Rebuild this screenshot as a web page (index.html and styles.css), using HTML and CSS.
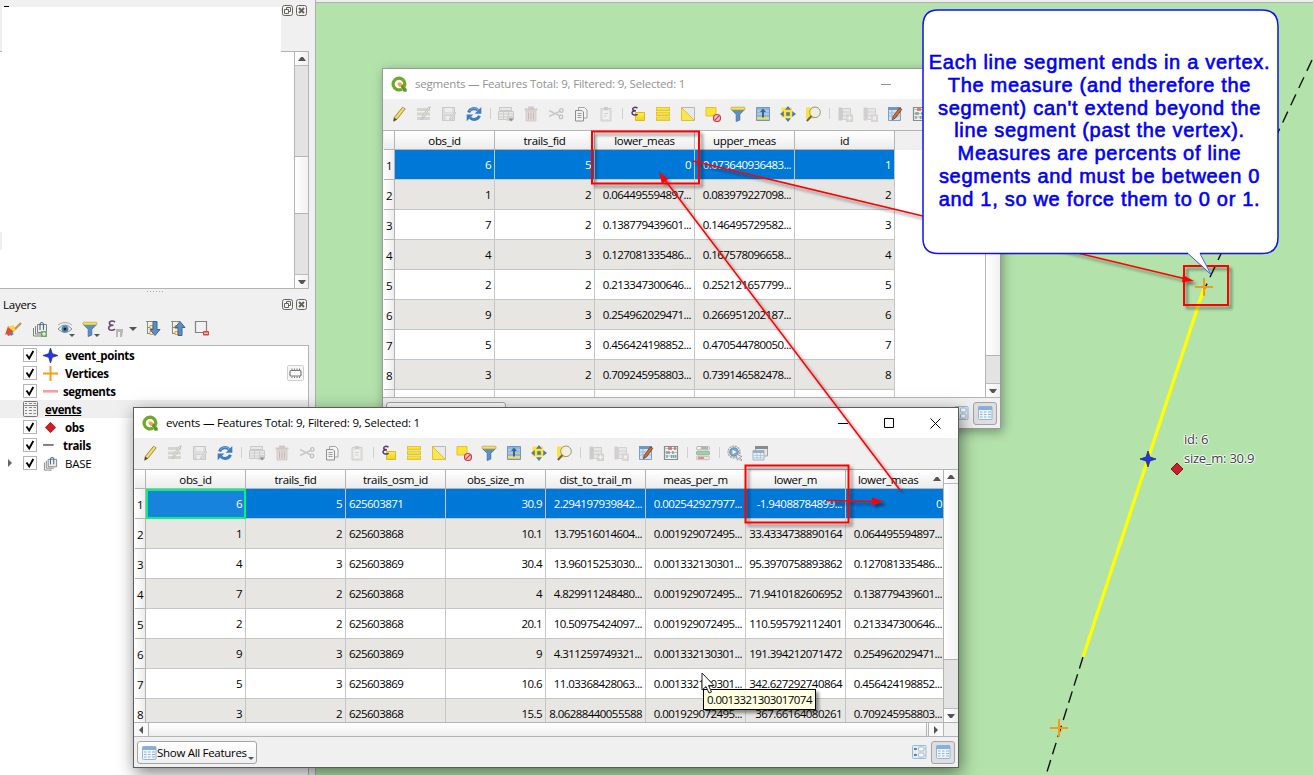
FILE: index.html
```
<!DOCTYPE html>
<html lang="en">
<head>
<meta charset="utf-8">
<title>QGIS attribute tables</title>
<link rel="stylesheet" href="styles.css">
</head>
<body>
<svg class="defs" width="0" height="0" aria-hidden="true">
  <defs>
    <linearGradient id="g-yellow" x1="0" y1="0" x2="0" y2="1"><stop offset="0" stop-color="#fff04a"/><stop offset="1" stop-color="#efd21c"/></linearGradient>
    <filter id="soft" x="-20%" y="-20%" width="140%" height="140%"><feDropShadow dx="3" dy="3" stdDeviation="1.5" flood-color="#000" flood-opacity=".45"/></filter>
    <symbol id="qgis" viewBox="0 0 16 16"><path d="M8 2.1a5.9 5.9 0 1 0 3 11" fill="none" stroke="#72a52c" stroke-width="3.2"/><path d="M8 2.1a5.9 5.9 0 0 1 5.3 8.2" fill="none" stroke="#72a52c" stroke-width="3.2"/><path d="M8.500 8.500h3.200l4 4.400v2.800h-3z" fill="#589632"/><path d="M6.600 6.600h3l2 2-2.600 2.600-2.400-2.100z" fill="#f6a63c"/></symbol>
    <symbol id="pencil" viewBox="0 0 16 16"><path d="M11.500 1.300l2.700 1.500L6 13.300l-3.300 1.900.500-3.700z" fill="#e7cf45" stroke="#8f7f3a" stroke-width=".8"/><path d="M3.200 11.500L6 13.300l-3.500 2.200z" fill="#4d4935"/><path d="M12.800 2L4.600 12.400" stroke="#fff2a0" stroke-width=".8"/></symbol>
    <symbol id="multiedit" viewBox="0 0 16 16"><path d="M1 2h13v3H1zM1 6.500h13v3H1zM1 11h13v3H1z" fill="#c0beb4"/><path d="M14.500 1L8 11l-2.500 3 .8-4L12.500 1z" fill="#d9d6cf" stroke="#928f88" stroke-width=".8"/></symbol>
    <symbol id="save" viewBox="0 0 16 16"><path d="M1.500 1.500h12v13h-12z" fill="#d0d0cf" stroke="#a8a8a8"/><path d="M4 2h7v4H4z" fill="#eee"/><path d="M4 9.500h7v5H4z" fill="#ececec" stroke="#aaa" stroke-width=".7"/><path d="M15 7l-4.500 6-2 1 .5-2L13.500 6z" fill="#d8d8d5" stroke="#999" stroke-width=".7"/></symbol>
    <symbol id="refresh" viewBox="0 0 16 16"><path d="M2.600 6.500A5.700 5.700 0 0 1 12 4.300" fill="none" stroke="#3f7cc0" stroke-width="3"/><path d="M15.300 1v6.800H8.700z" fill="#3f7cc0"/><path d="M13.400 9.700A5.700 5.700 0 0 1 4 11.800" fill="none" stroke="#3f7cc0" stroke-width="3"/><path d="M.7 15.200V8.400h6.600z" fill="#3f7cc0"/><path d="M3.600 5A5 5 0 0 1 12 4" fill="none" stroke="#86b4e3" stroke-width=".9"/></symbol>
    <symbol id="addfeat" viewBox="0 0 16 16"><path d="M1.500 1.500h12v3h-12zM.5 5.500h15v8H.5z" fill="#e3e3e0" stroke="#aaa"/><path d="M1 8h14M1 11h14M5.500 5.500v8M10.500 5.500v8" stroke="#b4b4b1"/><path d="M9 10h6v5H9z" fill="#bbb"/><path d="M10.500 12.500h5L13 15.500z" fill="#444"/></symbol>
    <symbol id="trash" viewBox="0 0 16 16"><path d="M1.500 3.500h13M6 3V1.500h4V3" fill="none" stroke="#b9a5a2" stroke-width="1.800"/><path d="M3 5h10v10H3z" fill="#d6c6c3" stroke="#b5a29f" stroke-width=".8"/><path d="M5.500 6.500v7M8 6.500v7M10.500 6.500v7" stroke="#a58f8c"/></symbol>
    <symbol id="cut" viewBox="0 0 16 16"><path d="M1 4.500l11 5.500M1 10.500L12.500 5" stroke="#aaa" stroke-width="1.400"/><g fill="none" stroke="#999" stroke-width="1.300"><circle cx="13.300" cy="4.500" r="1.800"/><circle cx="13" cy="11" r="1.800"/></g></symbol>
    <symbol id="copy" viewBox="0 0 16 16"><path d="M5.500 1.500h6l2.500 2.500v8H5.500z" fill="#f4f4f4" stroke="#a3a3a3"/><path d="M2.500 4.500H9l1.500 1.500v9h-8z" fill="#f2f2f2" stroke="#8f8f8f"/><path d="M4.500 7.500h4M4.500 9.500h4M4.500 11.500h4" stroke="#9d9d9d"/></symbol>
    <symbol id="paste" viewBox="0 0 16 16"><path d="M3 2.500h10v12.500H3z" fill="#dcdcda" stroke="#b5b5b3"/><path d="M6 1h4v3H6z" fill="#b0b0ae"/><path d="M5 5h6v8H5z" fill="#f0f0ef"/><path d="M6 7.500h4M6 10h3" stroke="#bbb"/></symbol>
    <symbol id="selexp" viewBox="0 0 16 16"><path d="M5.500 6.500h9v8h-9z" fill="url(#g-yellow)" stroke="#d8ba25"/><path d="M7.500 2.200C5.500.8 2.500 1.200 2.700 3.300c.1 1.400 1.700 1.500 3.300 1.500-2 0-4 .4-4 2.300 0 2.300 3.500 2.600 5.600 1" fill="none" stroke="#5b3a66" stroke-width="1.500"/></symbol>
    <symbol id="selall" viewBox="0 0 16 16"><g fill="url(#g-yellow)" stroke="#dfc22c" stroke-width=".9"><rect x="1.500" y="1.500" width="13" height="3.300"/><rect x="1.500" y="6.300" width="13" height="3.300"/><rect x="1.500" y="11.100" width="13" height="3.300"/></g></symbol>
    <symbol id="invert" viewBox="0 0 16 16"><path d="M1.500 1.500h13v13z" fill="#e9e9e9" stroke="#b6b6b6"/><path d="M1.500 1.500v13h13z" fill="#fbe650" stroke="#dcc03a"/></symbol>
    <symbol id="desel" viewBox="0 0 16 16"><path d="M1 1.500h10v8.500H1z" fill="#fbe338" stroke="#dfc22c"/><circle cx="12" cy="12" r="3.500" fill="#f3c5c5" stroke="#d7393f" stroke-width="1.200"/><path d="M9.800 14.200l4.500-4.500" stroke="#d7393f" stroke-width="1.200"/></symbol>
    <symbol id="filter" viewBox="0 0 16 16"><path d="M1.300 3.500h13.400L9.800 8.300v5.800L6.200 15.500V8.300z" fill="#5c8fc4" stroke="#446f9d" stroke-width=".8"/><rect x="1" y="1.200" width="14" height="2.700" rx=".8" fill="#f4e25c" stroke="#b7a438" stroke-width=".7"/></symbol>
    <symbol id="movetop" viewBox="0 0 16 16"><path d="M1.500 1.500h13v13h-13z" fill="#8fb5dc" stroke="#6b98c4"/><path d="M2 5h12M2 8h12" stroke="#c3d9ee"/><path d="M2 11h12v2.500H2z" fill="#f5dc4a"/><path d="M8 2.500l3 3.500H9v5.500H7V6H5z" fill="#38658f"/></symbol>
    <symbol id="pan" viewBox="0 0 16 16"><path d="M1.500 1.500h10.500v10H1.500z" fill="#fbe338"/><path d="M8 0l3 3.800H5zM8 16l3-3.800H5zM0 8l3.800-3v6zM16 8l-3.800-3v6z" fill="#54799c"/><path d="M6.200 6.200h3.600v3.600H6.200z" fill="#54799c"/></symbol>
    <symbol id="zoom" viewBox="0 0 16 16"><path d="M1 1.500h8v11H1z" fill="#fbe338"/><circle cx="10" cy="6.300" r="5.300" fill="#f1eee2" fill-opacity=".92" stroke="#99947f" stroke-width="1"/><path d="M6.500 10L1.800 15" stroke="#6d6548" stroke-width="2"/></symbol>
    <symbol id="newfield" viewBox="0 0 16 16"><path d="M1.500 1.500h3.500v13H1.500z" fill="#b0b0b0"/><path d="M5.500 2.500h8v11h-8z" fill="#dedede" stroke="#b4b4b4"/><path d="M5.500 6h8M5.500 9.500h8" stroke="#bbb"/><path d="M9 8.500h7V16H9z" fill="#bcbdb2"/><path d="M12.500 10v4.500M10.200 12.200h4.600" stroke="#fafafa" stroke-width="1.300"/></symbol>
    <symbol id="delfield" viewBox="0 0 16 16"><path d="M1.500 1.500h3.500v13H1.500z" fill="#b8b5b5"/><path d="M5.500 2.500h8v11h-8z" fill="#dedede" stroke="#bbb"/><path d="M5.500 6h8M5.500 9.500h8" stroke="#bdbdbd"/><path d="M9 8.500h7V16H9z" fill="#cdbdbd"/><path d="M11 10.700l3 3M14 10.700l-3 3" stroke="#fafafa" stroke-width="1.200"/></symbol>
    <symbol id="editform" viewBox="0 0 16 16"><path d="M1.500 1.500h12v13h-12z" fill="#d3e2f1" stroke="#7ba0c4"/><path d="M1 1h13v3H1z" fill="#6d99c6"/><path d="M2 7h11M2 10h11M5 4v10" stroke="#9cbad6"/><path d="M12.500 1.800l2.300 1.500L8.500 12l-3 1.700.6-3.200z" fill="#d26a33" stroke="#743b20" stroke-width=".8"/></symbol>
    <symbol id="calc" viewBox="0 0 16 16"><path d="M1.500 1v14M14.500 1v14M1 14.500h14M1 1.500h14" stroke="#8b8b8b" stroke-width="1.200"/><path d="M1.500 3.500h13M1.500 7.500h13M1.500 11h13" stroke="#a6a6a6" stroke-width=".7"/><path d="M6 2v3M8 2v3M12 2v3" stroke="#d0585a" stroke-width="1.400"/><path d="M4 6v3M6 6v3M10 6v3" stroke="#6fa874" stroke-width="1.400"/><path d="M4 10v3M8.500 10v3M10.500 10v3M12.500 10v3" stroke="#7b9fc3" stroke-width="1.400"/></symbol>
    <symbol id="condfmt" viewBox="0 0 16 16"><rect x="1.500" y="1.500" width="13" height="3.200" rx="1" fill="#eee" stroke="#aaa" stroke-width=".8"/><rect x="1.500" y="6.300" width="13" height="3.500" rx="1" fill="#9fd09d" stroke="#8ea98d" stroke-width=".8"/><rect x="1.500" y="11.400" width="13" height="3.300" rx="1" fill="#f0e2e2" stroke="#b5b5b5" stroke-width=".8"/><path d="M3 13h6" stroke="#cf3b3b"/><path d="M6 3h7" stroke="#777"/></symbol>
    <symbol id="action" viewBox="0 0 16 16"><circle cx="7" cy="7" r="5.900" fill="none" stroke="#aaa" stroke-width="1.500" stroke-dasharray="2 .8"/><circle cx="7" cy="7" r="4.200" fill="#7aa6d0" stroke="#5f88ae"/><path d="M5.500 4.800l4 2.200-4 2.200z" fill="#fff"/><path d="M9 9l6 2.500-2.500 1L15 15l-1 .8-2.400-2.600-1.200 2z" fill="#eee" stroke="#888" stroke-width=".7"/></symbol>
    <symbol id="dock" viewBox="0 0 16 16"><path d="M3.500 1.500h12v9.500h-12z" fill="#e9e9e9" stroke="#a5a5a5"/><path d="M3 1h13v3H3z" fill="#8b8b8b"/><path d="M1 5.500h11v9.500H1z" fill="#e9f0f7" stroke="#a3b1be"/><path d="M1 6h11v2H1z" fill="#90b2d2"/><path d="M2 10.500h9M2 12.800h9M5 8v6M8.500 8v6" stroke="#a9c2da" stroke-width=".8"/></symbol>
    <symbol id="table" viewBox="0 0 16 16"><rect x="1.500" y="1.500" width="13.500" height="13" rx="1" fill="#eff5fb" stroke="#94b6d7"/><path d="M1.500 1.500H15V5H1.500z" fill="#84afda"/><path d="M3 7h2.500M7 7h2.500M11 7h3M3 9.500h2.500M7 9.500h2.500M11 9.500h3M3 12h2.500M7 12h2.500M11 12h3" stroke="#8eb3d8" stroke-width="1.100"/></symbol>
    <symbol id="form" viewBox="0 0 16 16"><rect x="1.500" y="1.500" width="13.500" height="13" rx="1" fill="#e2edf7" stroke="#9bb9d7"/><path d="M3 5h2.800M3 11h2.800" stroke="#31597f" stroke-width="1.300"/><g fill="#fff" stroke="#9bb9d7"><rect x="7.500" y="3" width="5.500" height="4" rx="1"/><rect x="7.500" y="9" width="5.500" height="4" rx="1"/></g></symbol>
    <symbol id="float" viewBox="0 0 11 11"><rect x=".5" y=".5" width="10" height="10" rx="2" fill="#f3f3f3" stroke="#65635c"/><path d="M4.500 4.500V2.500h4v4H6.500M2.500 4.500h4v4h-4z" fill="none" stroke="#65635c"/></symbol>
    <symbol id="close" viewBox="0 0 11 11"><rect x=".5" y=".5" width="10" height="10" rx="2" fill="#f3f3f3" stroke="#65635c"/><path d="M3 3l5 5M8 3L3 8" stroke="#65635c" stroke-width="2"/></symbol>
    <symbol id="check" viewBox="0 0 14 14"><rect x=".5" y=".5" width="13" height="13" fill="#fff" stroke="#b6b6b6"/><path d="M3.500 6.500l2.700 4L10.300 3" fill="none" stroke="#000" stroke-width="1.900"/></symbol>
    <symbol id="star" viewBox="0 0 14 14"><path d="M7 0l1.700 5.300L14 7 8.700 8.700 7 14 5.300 8.700 0 7l5.300-1.700z" fill="#2436e6" stroke="#252a66" stroke-width=".7"/></symbol>
    <symbol id="group" viewBox="0 0 16 16"><path d="M1.500 7v8h8M3.500 5v8h8" fill="none" stroke="#7d827a"/><path d="M5.500 3.500h9v8h-9z" fill="#eceeea" stroke="#7d827a"/><path d="M8 9V3.500c0-2.600 3.500-2.600 3.500 0v5.200" fill="none" stroke="#416b94" stroke-width="1.100"/></symbol>
    <symbol id="up" viewBox="0 0 8 4"><path d="M0 4l3-4h2l3 4z" fill="#555"/></symbol>
    <symbol id="down" viewBox="0 0 8 4"><path d="M0 0l3 4h2l3-4z" fill="#555"/></symbol>
    <symbol id="winmin" viewBox="0 0 11 11"><path d="M0 5.500h10" stroke="currentColor"/></symbol>
  </defs>
</svg>

<main class="desktop">
  <aside class="sidebar">
    <div class="dash"></div>
    <section class="browser">
      <div class="browser-head">
        <div class="blank"></div>
        <div class="dock-btns"><svg><use href="#float"/></svg><svg><use href="#close"/></svg></div>
      </div>
      <div class="browser-body">
        <div class="browser-area"><i class="notch"></i></div>
        <div class="vscroll">
          <span class="sbtn"><svg><use href="#up"/></svg></span>
          <span class="groove browser-top"></span><span class="thumb browser-thumb"></span><span class="groove grow"></span>
          <span class="sbtn"><svg><use href="#down"/></svg></span>
        </div>
      </div>
    </section>
    <div class="grip"></div>
    <section class="layers">
      <div class="layers-head"><span>Layers</span><div class="dock-btns"><svg><use href="#float"/></svg><svg><use href="#close"/></svg></div></div>
      <svg class="layer-tools" width="220" height="24" viewBox="0 0 220 24">
        <path d="M8 9l6 5-3 4-3 1-1-2-2 1 1-3z" fill="#e64e32"/><path d="M8 10l5-2 4 4-3 3z" fill="#f6d64a"/><path d="M9 14l5 3-3 2z" fill="#4389cb"/><path d="M15 12l6-6" stroke="#c98e4c" stroke-width="2.200"/>
        <use href="#group" x="32" y="4" width="16" height="16"/><path d="M41 14h6v6h-6z" fill="#74a66f"/><path d="M44 15v4M42 17h4" stroke="#fff"/>
        <path d="M58 12q7-8 14 0-7 7-14 0" fill="#e8eef2" stroke="#8a8c90"/><circle cx="65" cy="12" r="3.500" fill="#4e87b8"/><circle cx="65" cy="12" r="1.500" fill="#222"/><path d="M58 8q7-5 14 0" fill="none" stroke="#aaa"/><path d="M69 17h6l-3 3z" fill="#555"/>
        <use href="#filter" x="82" y="4" width="16" height="16"/><path d="M94 17h6l-3 3z" fill="#555"/>
        <path d="M115 5c-3-2-6-.5-5.500 1.600.3 1.400 2 1.700 4 1.700-3 0-5 .8-4.800 3 .3 2.400 4 2.600 6.300.8" fill="none" stroke="#6b4676" stroke-width="1.600"/><path d="M116 12h7v2l-1 6h-2v-5h-2v5h-2z" fill="#b8b8b8"/><path d="M129 10h8l-4 4z" fill="#555"/>
        <g fill="none" stroke="#8b8b7b"><path d="M146 4.500h9M147.500 5v12M148 10.500h4M148 16.500h4"/><path d="M171 4.500h9M172.500 5v12M173 10.500h4M173 16.500h4"/></g>
        <g fill="#fff3c8" stroke="#e99c25"><path d="M150 8.500h3v3h-3zM150 14.500h3v3h-3zM175 8.500h3v3h-3zM175 14.500h3v3h-3z"/></g>
        <path d="M153 4.500h4v8h3l-5 6-5-6h3z" fill="#5a8fc7" stroke="#3c6692"/><path d="M178 18.500h4v-8h3l-5-6-5 6h3z" fill="#5a8fc7" stroke="#3c6692"/>
        <path d="M195.500 4.500h11v11h-11z" fill="#f2f2f2" stroke="#828282" stroke-width="1.200"/><rect x="203" y="14" width="6" height="4.500" rx="1" fill="#ec3b3b"/><path d="M204 16.200h4" stroke="#fff"/>
      </svg>
      <div class="tree">
        <div class="layer"><svg class="cb"><use href="#check"/></svg><svg class="sym"><use href="#star"/></svg><b class="ind">event_points</b></div>
        <div class="layer"><svg class="cb"><use href="#check"/></svg><svg class="sym" viewBox="0 0 14 14"><path d="M7 0v14M0 7h14" stroke="#f79b14" stroke-width="1.800"/></svg><b class="ind">Vertices</b>
          <svg class="chip" viewBox="0 0 17 16"><rect x=".5" y=".5" width="16" height="15" rx="1" fill="#f6f6f6" stroke="#cfcfcf"/><rect x="3" y="5.500" width="11" height="5.500" rx="1" fill="#fff" stroke="#777" stroke-width="1.200"/><path d="M5 3.500V5M7.500 3.500V5M10 3.500V5M12.500 3.500V5M5 11.500V13M7.500 11.500V13M10 11.500V13M12.500 11.500V13" stroke="#777"/></svg></div>
        <div class="layer"><svg class="cb"><use href="#check"/></svg><svg class="sym" viewBox="0 0 14 14"><path d="M0 6.800h14" stroke="#f2a19c" stroke-width="2.500"/></svg><b>segments</b></div>
        <div class="layer current"><svg class="tbl" viewBox="0 0 15 16"><rect x=".5" y=".5" width="14" height="15" rx="1" fill="#f0f0ee" stroke="#777"/><path d="M2 2.500h2M6 2.500h3M10.500 2.500H13M2 6.500h2M6 6.500h3M10.500 6.500H13M2 9.500h2M6 9.500h3M10.500 9.500H13M2 12.500h2M6 12.500h3M10.500 12.500H13M0 4.500h15" stroke="#888"/></svg><b class="und">events</b></div>
        <div class="layer"><svg class="cb"><use href="#check"/></svg><svg class="sym" viewBox="0 0 14 14"><path d="M7 2.200L11.800 7 7 11.800 2.200 7z" fill="#d31c28" stroke="#8d1a20" stroke-width=".8"/></svg><b class="ind">obs</b></div>
        <div class="layer"><svg class="cb"><use href="#check"/></svg><svg class="sym" viewBox="0 0 14 14"><path d="M0 6.500h10" stroke="#6f6f6f" stroke-width="1.600"/></svg><b>trails</b></div>
        <div class="layer"><svg class="tri" viewBox="0 0 4 8"><path d="M0 0v8l4-4z" fill="#666"/></svg><svg class="cb"><use href="#check"/></svg><svg class="sym"><use href="#group"/></svg><span class="ind">BASE</span></div>
      </div>
    </section>
  </aside>

  <section class="map">
    <svg width="998" height="775" viewBox="315 0 998 775">
      <path d="M1312 60L1204 290" fill="none" stroke="#111" stroke-width="1.400" stroke-dasharray="12 7"/>
      <path d="M1083 657L1046 775" fill="none" stroke="#111" stroke-width="1.400" stroke-dasharray="12 6"/>
      <path d="M1204 288L1083 657" stroke="#ff0" stroke-width="3.300"/>
      <path d="M1204 278v18M1195 287h18M1059 719v18M1050 728h18" stroke="#f79b14" stroke-width="2"/>
      <use href="#star" x="1140" y="451" width="16" height="16"/>
      <path d="M1177 463l6 6-6 6-6-6z" fill="#d01c2a" stroke="#6f1a20"/>
    </svg>
    <p class="map-label">id: 6<br>size_m: 30.9</p>
  </section>

  <section class="window segments">
    <header class="titlebar"><svg class="logo"><use href="#qgis"/></svg><h1>segments — Features Total: 9, Filtered: 9, Selected: 1</h1><svg class="wc"><use href="#winmin"/></svg></header>
    <nav class="toolbar">
      <svg><use href="#pencil"/></svg><svg><use href="#multiedit"/></svg><svg><use href="#save"/></svg><svg><use href="#refresh"/></svg><i></i>
      <svg><use href="#addfeat"/></svg><svg><use href="#trash"/></svg><svg><use href="#cut"/></svg><svg><use href="#copy"/></svg><svg><use href="#paste"/></svg><i></i>
      <svg><use href="#selexp"/></svg><svg><use href="#selall"/></svg><svg><use href="#invert"/></svg><svg><use href="#desel"/></svg><svg><use href="#filter"/></svg><svg><use href="#movetop"/></svg><svg><use href="#pan"/></svg><svg><use href="#zoom"/></svg><i></i>
      <svg><use href="#newfield"/></svg><svg><use href="#delfield"/></svg><svg><use href="#editform"/></svg><svg><use href="#calc"/></svg>
    </nav>
    <div class="grid">
      <div class="rows">
        <div class="row head"><span></span><span>obs_id</span><span>trails_fid</span><span>lower_meas</span><span>upper_meas</span><span>id</span></div>
        <div class="row sel"><em>1</em><span>6</span><span>5</span><span>0</span><span>0.073640936483...</span><span>1</span></div>
        <div class="row"><em>2</em><span>1</span><span>2</span><span>0.064495594897...</span><span>0.083979227098...</span><span>2</span></div>
        <div class="row"><em>3</em><span>7</span><span>2</span><span>0.138779439601...</span><span>0.146495729582...</span><span>3</span></div>
        <div class="row"><em>4</em><span>4</span><span>3</span><span>0.127081335486...</span><span>0.167578096658...</span><span>4</span></div>
        <div class="row"><em>5</em><span>2</span><span>2</span><span>0.213347300646...</span><span>0.252121657799...</span><span>5</span></div>
        <div class="row"><em>6</em><span>9</span><span>3</span><span>0.254962029471...</span><span>0.266951202187...</span><span>6</span></div>
        <div class="row"><em>7</em><span>5</span><span>3</span><span>0.456424198852...</span><span>0.470544780050...</span><span>7</span></div>
        <div class="row"><em>8</em><span>3</span><span>2</span><span>0.709245958803...</span><span>0.739146582478...</span><span>8</span></div>
        <div class="row"><em></em><span></span><span></span><span></span><span></span><span></span></div>
      </div>
      <div class="vscroll">
        <span class="sbtn"><svg><use href="#up"/></svg></span><span class="thumb seg-thumb"></span><span class="groove grow"></span><span class="sbtn"><svg><use href="#down"/></svg></span>
      </div>
    </div>
    <footer class="statusbar"><button class="show"></button><svg class="vform"><use href="#form"/></svg><span class="pressed"><svg><use href="#table"/></svg></span></footer>
  </section>

  <section class="window events">
    <header class="titlebar"><svg class="logo"><use href="#qgis"/></svg><h1>events — Features Total: 9, Filtered: 9, Selected: 1</h1>
      <svg class="wc"><use href="#winmin"/></svg><svg class="wc" viewBox="0 0 11 11"><path d="M.5.500h9v9h-9z" fill="none" stroke="#000"/></svg><svg class="wc" viewBox="0 0 11 11"><path d="M.5.500l10 10M10.500.500l-10 10" stroke="#000"/></svg></header>
    <nav class="toolbar">
      <svg><use href="#pencil"/></svg><svg><use href="#multiedit"/></svg><svg><use href="#save"/></svg><svg><use href="#refresh"/></svg><i></i>
      <svg><use href="#addfeat"/></svg><svg><use href="#trash"/></svg><svg><use href="#cut"/></svg><svg><use href="#copy"/></svg><svg><use href="#paste"/></svg><i></i>
      <svg><use href="#selexp"/></svg><svg><use href="#selall"/></svg><svg><use href="#invert"/></svg><svg><use href="#desel"/></svg><svg><use href="#filter"/></svg><svg><use href="#movetop"/></svg><svg><use href="#pan"/></svg><svg><use href="#zoom"/></svg><i></i>
      <svg><use href="#newfield"/></svg><svg><use href="#delfield"/></svg><svg><use href="#editform"/></svg><svg><use href="#calc"/></svg><i></i>
      <svg><use href="#condfmt"/></svg><i></i><svg><use href="#action"/></svg><svg><use href="#dock"/></svg>
    </nav>
    <div class="grid">
      <div class="rows">
        <div class="row head"><span></span><span>obs_id</span><span>trails_fid</span><span>trails_osm_id</span><span>obs_size_m</span><span>dist_to_trail_m</span><span>meas_per_m</span><span>lower_m</span><span class="sorted">lower_meas<svg><use href="#up"/></svg></span></div>
        <div class="row sel"><em>1</em><span class="active">6</span><span>5</span><span class="txt">625603871</span><span>30.9</span><span>2.294197939842...</span><span>0.002542927977...</span><span>-1.94088784899...</span><span>0</span></div>
        <div class="row"><em>2</em><span>1</span><span>2</span><span class="txt">625603868</span><span>10.1</span><span>13.79516014604...</span><span>0.001929072495...</span><span>33.4334738890164</span><span>0.064495594897...</span></div>
        <div class="row"><em>3</em><span>4</span><span>3</span><span class="txt">625603869</span><span>30.4</span><span>13.96015253030...</span><span>0.001332130301...</span><span>95.3970758893862</span><span>0.127081335486...</span></div>
        <div class="row"><em>4</em><span>7</span><span>2</span><span class="txt">625603868</span><span>4</span><span>4.829911248480...</span><span>0.001929072495...</span><span>71.9410182606952</span><span>0.138779439601...</span></div>
        <div class="row"><em>5</em><span>2</span><span>2</span><span class="txt">625603868</span><span>20.1</span><span>10.50975424097...</span><span>0.001929072495...</span><span>110.595792112401</span><span>0.213347300646...</span></div>
        <div class="row"><em>6</em><span>9</span><span>3</span><span class="txt">625603869</span><span>9</span><span>4.311259749321...</span><span>0.001332130301...</span><span>191.394212071472</span><span>0.254962029471...</span></div>
        <div class="row"><em>7</em><span>5</span><span>3</span><span class="txt">625603869</span><span>10.6</span><span>11.03368428063...</span><span>0.001332130301...</span><span>342.627292740864</span><span>0.456424198852...</span></div>
        <div class="row"><em>8</em><span>3</span><span>2</span><span class="txt">625603868</span><span>15.5</span><span>8.06288440055588</span><span>0.001929072495...</span><span>367.66164080261</span><span>0.709245958803...</span></div>
      </div>
      <div class="vscroll">
        <span class="sbtn"><svg><use href="#up"/></svg></span><span class="thumb ev-thumb"></span><span class="groove grow"></span><span class="sbtn"><svg><use href="#down"/></svg></span>
      </div>
    </div>
    <div class="hscroll"><span class="hbtn"><svg viewBox="0 0 4 8"><path d="M4 0v8L0 4z" fill="#555"/></svg></span><span class="hthumb"></span><span class="hbtn"><svg viewBox="0 0 4 8"><path d="M0 0v8l4-4z" fill="#555"/></svg></span><span class="corner"></span></div>
    <footer class="statusbar"><button class="show"><svg><use href="#table"/></svg>Show All Features<i></i></button><svg class="vform"><use href="#form"/></svg><span class="pressed"><svg><use href="#table"/></svg></span></footer>
  </section>

  <div class="tooltip">0.0013321303017074</div>
  <svg class="notes" width="1313" height="775" viewBox="0 0 1313 775">
    <path d="M702 673v17l4-3.500 3 6.500 2.500-1-3-6.500h5.500z" fill="#fff" stroke="#222"/>
    <g filter="url(#soft)">
      <g fill="none" stroke="#f00" stroke-width="2"><path d="M592 131.500h107v52H592zM745.500 465.500h103v57h-103zM1184 266h44v39h-44z"/></g>
      <path d="M693 161L1186 279M900 490L665 180M826 500.500L874 501.500" stroke="#f00" stroke-width="1.500"/>
      <path d="M1194 281l-11-6-1 7zM659 172l3 12 6-5zM884 501.500l-12-4v7.500z" fill="#f00"/>
    </g>
    <path d="M938 10h324q16 0 16 16v211q0 16-16 16h-62l11 21-23-21H938q-15 0-15-15V26q0-16 15-16z" fill="#fff"/>
    <path d="M1188 253.500H938q-15 0-15-15V26q0-16 15-16h324q16 0 16 16v211.500q0 16-16 16h-62" fill="none" stroke="#1010f0" stroke-width="1.500"/>
    <path d="M1188 253.500l23 21-11-21" fill="none" stroke="#4a5af0" stroke-width="1"/>
  </svg>
  <p class="callout">Each line segment ends in a vertex.<br>The measure (and therefore the<br>segment) can't extend beyond the<br>line segment (past the vertex).<br>Measures are percents of line<br>segments and must be between 0<br>and 1, so we force them to 0 or 1.</p>
</main>
</body>
</html>
```

FILE: styles.css
```
* { box-sizing: border-box; }
body { margin: 0; font: 11.5px/16px "Open Sans", "Noto Sans", sans-serif; letter-spacing: -.25px; color: #000; }
svg { display: block; flex: none; }
.defs { position: absolute; }
.desktop { position: relative; display: flex; width: 1313px; height: 775px; overflow: hidden; background: #f0f0f0; }

/* docked panels */
.sidebar { position: relative; width: 315px; display: flex; flex-direction: column; padding-top: 5px; }
.dash { position: absolute; left: 4px; top: 6px; width: 5px; height: 1px; background: #000; }
.browser-head { position: relative; z-index: 1; display: flex; height: 46px; padding-left: 2px; gap: 1px; }
.blank { width: 279px; height: 45px; margin-top: 2px; background: #fff; }
.dock-btns { display: flex; gap: 3px; }
.dock-btns svg { width: 11px; height: 11px; }
.browser-body { display: flex; width: 309px; height: 238px; border: 1px solid #b4b4b4; border-left: 0; background: #fff; }
.browser-area { flex: 1; padding-top: 180px; }
.notch { display: block; width: 2px; height: 18px; background: #f0f0f0; }
.vscroll { width: 15px; display: flex; flex-direction: column; border-left: 1px solid #b4b4b4; background: #fff; }
.browser .vscroll { width: 14px; }
.sbtn { height: 14px; display: grid; place-items: center; background: linear-gradient(90deg, #fff, #f0f0f0); }
.sbtn:first-child { border-bottom: 1px solid #bbb; }
.sbtn:last-child { border-top: 1px solid #bbb; }
.sbtn svg { width: 8px; height: 4px; }
.groove { background: #e3e3e3; }
.grow { flex: 1; }
.thumb { background: linear-gradient(90deg, #fff, #f1f1f1); border-bottom: 1px solid #b4b4b4; }
.browser-top { height: 90px; }
.browser-thumb { height: 58px; border-top: 1px solid #b4b4b4; }
.grip { width: 17px; height: 1px; margin: 2px 0 0 147px; background: repeating-linear-gradient(90deg, #aaa 0 1px, transparent 1px 3px); }
.layers { display: flex; flex-direction: column; flex: 1; }
.layers-head { display: flex; justify-content: space-between; align-items: center; height: 24px; padding: 2px 8px 1px 3px; }
.layer-tools { height: 24px; margin-top: 1px; margin-bottom: 4px; }
.tree { flex: 1; width: 309px; border-top: 1px solid #b4b4b4; border-right: 1px solid #b4b4b4; background: #fff; }
.layer { display: flex; align-items: center; height: 18px; padding-left: 23px; position: relative; }
.layer b, .layer span { padding-top: 2px; }
.layer b { letter-spacing: -.35px; }
.layer .cb { width: 14px; height: 14px; margin-right: 6px; }
.layer .sym { width: 15px; height: 15px; margin-right: 5px; }
.layer .ind { margin-left: 2px; }
.layer .und { text-decoration: underline; margin-left: 7px; }
.layer .tbl { width: 15px; height: 16px; }
.layer .tri { width: 4px; height: 8px; position: absolute; left: 8px; top: 5px; }
.layer .chip { width: 17px; height: 16px; margin-left: auto; margin-right: 4px; }
.current { background: #efefef; }

/* map canvas */
.map { position: relative; flex: 1; background: #b3e2ab; border-left: 1px solid #adadad; }
.map::before { content: ""; position: absolute; left: 0; right: 0; top: 0; height: 2px; background: #eee; border-bottom: 1px solid #b0b0b0; }
.map svg { margin-left: -1px; }
.map-label { position: absolute; left: 868px; top: 430px; margin: 0; font: 13px/19px "Open Sans", sans-serif; color: #3c3c46; white-space: nowrap; text-shadow: 1px 0 1px #fff, -1px 0 1px #fff, 0 1px 1px #fff, 0 -1px 1px #fff, 0 0 2px #fff; }

/* attribute table windows */
.window { position: absolute; display: flex; flex-direction: column; border: 1px solid #707070; background: #f0f0f0; }
.segments { left: 382px; top: 68px; width: 619px; height: 361px; border-color: #9a9a9a; box-shadow: 2px 3px 10px rgba(0,0,0,.35); }
.events { left: 133px; top: 407px; width: 826px; height: 361px; border-color: #5c5c5c; box-shadow: 2px 5px 16px rgba(0,0,0,.5); }
.titlebar { display: flex; align-items: center; height: 30px; padding-left: 8px; background: #fff; }
.segments .titlebar { color: #929292; }
.titlebar h1 { flex: 1; margin: 0 0 0 8px; font-size: 11.5px; font-weight: 400; letter-spacing: -.2px; white-space: nowrap; }
.logo { width: 16px; height: 16px; }
.wc { width: 11px; height: 11px; margin-right: 35px; }
.events .wc:last-child { margin-right: 17px; }
.segments .wc { margin-right: 108px; }
.toolbar { display: flex; align-items: center; height: 31px; padding: 0 0 2px 8px; gap: 9px; overflow: hidden; }
.toolbar svg { width: 16px; height: 16px; }
.toolbar svg:nth-child(2), .toolbar svg:nth-child(3), .toolbar svg:nth-child(6), .toolbar svg:nth-child(7), .toolbar svg:nth-child(8), .toolbar svg:nth-child(10), .toolbar svg:nth-child(21), .toolbar svg:nth-child(22) { opacity: .55; }
.toolbar i { flex: none; width: 1px; height: 11px; margin: 0 -2px 0 -1px; background: #d0d0d0; }
.grid { display: flex; height: 268px; border-top: 1px solid #b4b4b4; border-bottom: 1px solid #b4b4b4; background: #fff; overflow: hidden; }
.events .grid { height: 254px; }
.rows { flex: 1; overflow: hidden; padding-left: 1px; }
.segments .rows { background: linear-gradient(#f0f0f0 19px, #fff 19px); }
.row { display: grid; grid-template-columns: 11px repeat(5, 100px); height: 30px; }
.events .row { grid-template-columns: 11px repeat(8, 100px); }
.row > * { border-right: 1px solid #c6c6c6; border-bottom: 1px solid #c6c6c6; padding-right: 3px; text-align: right; line-height: 29px; letter-spacing: -.55px; white-space: nowrap; overflow: hidden; font-style: normal; }
.row > em { padding: 1px 0 0; text-align: center; background: linear-gradient(90deg, #fff, #ededed); border-color: #b4b4b4; }
.row > span { background: #fff; }
.row:nth-child(odd) > span { background: #e8e6e3; }
.row.sel > span { background: #0078d7; color: #fff; }
.row.head { height: 19px; width: 511px; }
.events .row.head { width: auto; }
.row.head > span { padding: 0; text-align: center; line-height: 19px; letter-spacing: -.35px; background: linear-gradient(#fff, #ececec); border-color: #b4b4b4; }
.row > .txt { text-align: left; padding-left: 3px; }
.row.sel > .active { border: 2px solid #00f57c; background: #1883dd; line-height: 26px; padding-right: 2px; }
.row.head > .sorted { display: flex; align-items: center; justify-content: space-between; padding: 0 4px 0 12px; }
.sorted svg { width: 8px; height: 4px; }
.seg-thumb { height: 211px; }
.ev-thumb { height: 176px; }
.hscroll { display: flex; height: 14px; border-bottom: 1px solid #b4b4b4; }
.hbtn { width: 15px; display: grid; place-items: center; background: #f9f9f9; border-right: 1px solid #b4b4b4; }
.hbtn svg { width: 4px; height: 8px; }
.hthumb { flex: 1; background: linear-gradient(#fff, #eee); border-right: 3px double #b4b4b4; }
.corner { width: 14px; }
.statusbar { display: flex; align-items: center; flex: 1; padding: 0 3px; }
.show { display: flex; align-items: center; width: 120px; height: 23px; padding: 1px 4px 0 3px; border: 1px solid #a4a4a4; border-radius: 3px; background: linear-gradient(#fff, #efefef); font: inherit; letter-spacing: -.3px; white-space: nowrap; }
.show svg { width: 16px; height: 16px; }
.show i { margin: 12px -2px 0 auto; border: 3px solid transparent; border-top-color: #555; border-bottom: 0; }
.vform { width: 16px; height: 16px; margin-left: auto; }
.pressed { display: grid; place-items: center; width: 24px; height: 23px; margin-left: 4px; border: 1px solid #a4a4a4; border-radius: 3px; background: #dedede; }
.pressed svg { width: 16px; height: 16px; }

/* overlays */
.tooltip { position: absolute; left: 703px; top: 689px; width: 113px; height: 21px; padding-left: 3px; border: 1px solid #000; background: #ffffe1; line-height: 20px; letter-spacing: -.55px; box-shadow: 3px 3px 3px rgba(0,0,0,.4); white-space: nowrap; }
.notes { position: absolute; left: 0; top: 0; }
.callout { position: absolute; left: 919px; top: 51px; width: 361px; margin: 0; text-align: center; font: 20px/22.8px "Liberation Sans", Arial, sans-serif; letter-spacing: .7px; color: #0000f5; -webkit-text-stroke: .6px #0000f5; white-space: nowrap; }
```
